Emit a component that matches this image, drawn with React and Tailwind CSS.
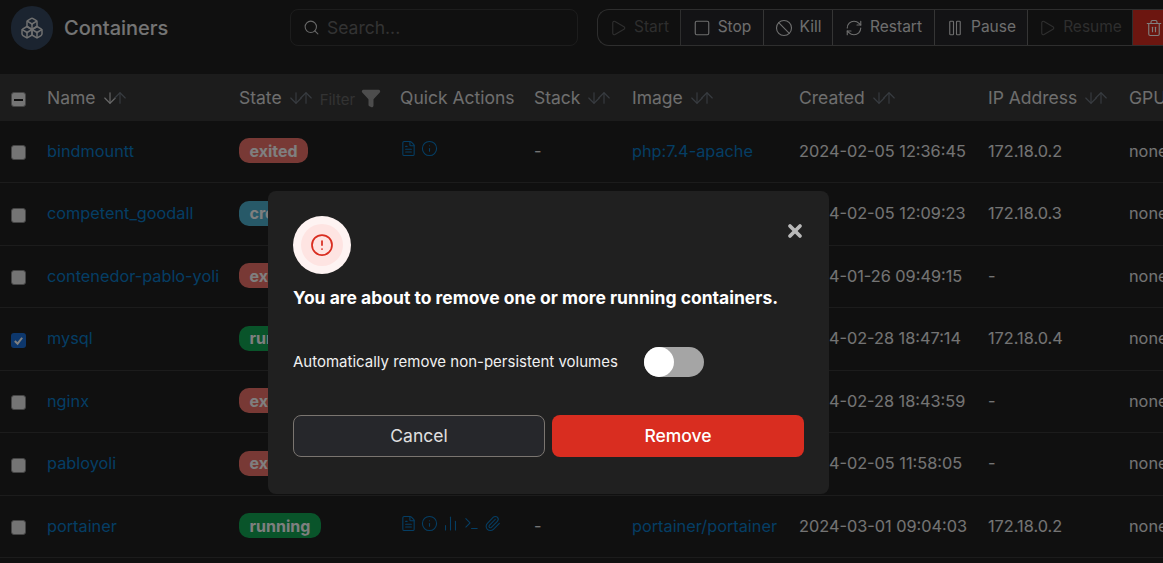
import React from 'react';
import { ArrowDown, ArrowUp, Ban, Boxes, ChartNoAxesColumn, CircleAlert, FileText, Filter, Info, Paperclip, Pause, Play, RefreshCw, Search, Square, Terminal, Trash2, X } from 'lucide-react';

const columns = 'grid grid-cols-[47px_192px_161px_134px_98px_167px_189px_141px_1fr] items-center';

const rows = [
  { name: 'bindmountt', state: 'exited', actions: 2, stack: '-', image: 'php:7.4-apache', created: '2024-02-05 12:36:45', ip: '172.18.0.2' },
  { name: 'competent_goodall', state: 'created', actions: 2, stack: '-', image: '', created: '2024-02-05 12:09:23', ip: '172.18.0.3' },
  { name: 'contenedor-pablo-yoli', state: 'exited', actions: 2, stack: '-', image: '', created: '2024-01-26 09:49:15', ip: '-' },
  { name: 'mysql', state: 'running', actions: 5, stack: '-', image: '', created: '2024-02-28 18:47:14', ip: '172.18.0.4', checked: true },
  { name: 'nginx', state: 'exited', actions: 2, stack: '-', image: '', created: '2024-02-28 18:43:59', ip: '-' },
  { name: 'pabloyoli', state: 'exited', actions: 2, stack: '-', image: '', created: '2024-02-05 11:58:05', ip: '-' },
  { name: 'portainer', state: 'running', actions: 5, stack: '-', image: 'portainer/portainer', created: '2024-03-01 09:04:03', ip: '172.18.0.2' },
];

const badgeColors = {
  exited: 'bg-[#f0736b]',
  created: 'bg-[#4fb3d0]',
  running: 'bg-[#12a855]',
};

function SortIcon({ strong }) {
  return (
    <span className="flex items-center ml-[5px]">
      <ArrowDown size={18} strokeWidth={1.5} className={strong ? 'text-[#d0d0d0]' : 'text-[#6f7680]'} />
      <ArrowUp size={18} strokeWidth={1.5} className="-ml-[8px] text-[#6f7680]" />
    </span>
  );
}

function ToolButton({ icon: Icon, label, disabled, first }) {
  return (
    <div className={`flex items-center justify-center gap-[7px] h-full text-[15.5px] border-r ${first ? 'rounded-l-[12px]' : ''} ${disabled ? 'text-[#5c5c5c] border-[#5c5c5c]' : 'text-[#dcdcdc] bg-[#26272b] border-[#6a6a6a]'}`}>
      <Icon size={18} strokeWidth={1.5} />
      <span className="-mt-0.5">{label}</span>
    </div>
  );
}

function Checkbox({ checked, partial }) {
  if (checked) {
    return (
      <div className="mt-[4px] w-[15px] h-[15px] rounded-[3px] bg-[#1a6fd8] flex items-center justify-center ml-[11px]">
        <svg width="11" height="11" viewBox="0 0 12 12" fill="none" stroke="#ffffff" strokeWidth="2.2"><path d="M2 6.5 5 9.5 10 3" /></svg>
      </div>
    );
  }
  return (
    <div className="mt-[4px] w-[15px] h-[15px] rounded-[3px] bg-[#e8e8e8] border border-[#8a8a8a] flex items-center justify-center ml-[11px]">
      {partial && <div className="w-[9px] h-[2px] bg-[#202020]" />}
    </div>
  );
}

function QuickActions({ count }) {
  return (
    <div className="flex items-center gap-[4px] text-[#0a7cc8] -mt-1">
      <FileText size={17} strokeWidth={1.5} />
      <Info size={17} strokeWidth={1.5} />
      {count > 2 && <ChartNoAxesColumn size={17} strokeWidth={1.5} />}
      {count > 2 && <Terminal size={17} strokeWidth={1.5} />}
      {count > 2 && <Paperclip size={17} strokeWidth={1.5} />}
    </div>
  );
}

function HeaderCell({ label, sort, strong }) {
  return (
    <div className="flex items-center text-[17.5px] text-[#dcdcdc] whitespace-nowrap">
      {label}
      {sort && <SortIcon strong={strong} />}
    </div>
  );
}

export default function App() {
  return (
    <div className="relative h-[563px] overflow-hidden bg-[#202020] [font-family:Inter,sans-serif]">
      {/* Top bar */}
      <div className="flex items-center h-[74px] pb-[19px]">
        <div className="ml-[11px] w-[42px] h-[44px] rounded-full bg-[#364860] flex items-center justify-center text-[#e0e0e0]">
          <Boxes size={24} strokeWidth={1.5} />
        </div>
        <h1 className="ml-[11px] w-[226px] text-[20px] font-medium text-[#e8e8e8]">Containers</h1>
        <div className="flex items-center gap-[7px] w-[288px] h-[37px] px-3 rounded-[8px] border border-[#3a3a3a] text-[#d0d0d0]">
          <Search size={17} strokeWidth={1.5} />
          <span className="mt-[2px] text-[17.5px] text-[#666666]">Search...</span>
        </div>
        <div className="ml-[19px] flex-1 h-[37px] grid grid-cols-[83px_83px_69px_102px_93px_105px_1fr] rounded-l-[12px] border border-r-0 border-[#5c5c5c] overflow-hidden">
          <ToolButton icon={Play} label="Start" disabled first />
          <ToolButton icon={Square} label="Stop" />
          <ToolButton icon={Ban} label="Kill" />
          <ToolButton icon={RefreshCw} label="Restart" />
          <ToolButton icon={Pause} label="Pause" />
          <ToolButton icon={Play} label="Resume" disabled />
          <div className="bg-[#d92d20] flex items-center pl-[12px] text-white">
            <Trash2 size={18} strokeWidth={1.5} />
          </div>
        </div>
      </div>

      {/* Table head */}
      <div className={`${columns} h-[46.5px] pt-[1px] bg-[#393939]`}>
        <Checkbox partial />
        <HeaderCell label="Name" sort strong />
        <div className="flex items-center">
          <HeaderCell label="State" sort />
          <span className="mt-[5px] ml-[5px] text-[15px] text-[#666666]">Filter</span>
          <Filter size={20} className="ml-[6px] text-[#9a9a9a]" fill="#9a9a9a" />
        </div>
        <HeaderCell label="Quick Actions" />
        <HeaderCell label="Stack" sort />
        <HeaderCell label="Image" sort />
        <HeaderCell label="Created" sort />
        <HeaderCell label="IP Address" sort />
        <HeaderCell label="GPUs" />
      </div>

      {/* Table rows */}
      {rows.map((row) => (
        <div key={row.name} className={`${columns} h-[62.5px] pb-[1px] border-b border-[#383838] text-[16.3px]`}>
          <Checkbox checked={row.checked} />
          <span className="text-[#0a7cc8] whitespace-nowrap">{row.name}</span>
          <div>
            <span className={`inline-flex items-center h-[25px] px-[10.5px] rounded-[10px] text-[16px] font-bold text-[#ffffff] ${badgeColors[row.state]}`}>
              {row.state}
            </span>
          </div>
          <QuickActions count={row.actions} />
          <span className="text-[#e8e8e8]">{row.stack}</span>
          <span className="text-[#0a7cc8] whitespace-nowrap">{row.image}</span>
          <span className="text-[#e8e8e8] whitespace-nowrap">{row.created}</span>
          <span className="text-[#e8e8e8]">{row.ip}</span>
          <span className="text-[#e8e8e8]">none</span>
        </div>
      ))}

      {/* Backdrop */}
      <div className="absolute inset-0 bg-black/50" />

      {/* Modal */}
      <div className="absolute left-[268px] top-[191px] w-[561px] h-[303px] rounded-[8px] bg-[#202020] p-[25px]">
        <X size={20} strokeWidth={4.5} className="absolute right-[24px] top-[30px] text-[#b8b8b8]" />
        <div className="w-[58px] h-[58px] rounded-full bg-[#fef3f2] flex items-center justify-center">
          <div className="w-[42px] h-[42px] rounded-full bg-[#fee4e2] flex items-center justify-center text-[#d92d20]">
            <CircleAlert size={24} strokeWidth={1.75} />
          </div>
        </div>
        <p className="mt-[14px] text-[17.5px] leading-[20px] font-bold text-white whitespace-nowrap">You are about to remove one or more running containers.</p>
        <div className="mt-[39px] flex items-center h-[30px]">
          <span className="w-[351px] text-[15px] text-[#f0f0f0]">Automatically remove non-persistent volumes</span>
          <div className="w-[60px] h-[30px] rounded-full bg-[#a5a5a5]">
            <div className="w-[30px] h-[30px] rounded-full bg-white" />
          </div>
        </div>
        <div className="mt-[38px] grid grid-cols-2 gap-[7px]">
          <div className="h-[42px] flex items-center justify-center rounded-[8px] bg-[#26272b] border border-[#7a7570] text-[#e0e0e0] text-[17.5px]">Cancel</div>
          <div className="h-[42px] flex items-center justify-center rounded-[8px] bg-[#d92d20] text-white text-[17.5px] font-medium">Remove</div>
        </div>
      </div>
    </div>
  );
}
